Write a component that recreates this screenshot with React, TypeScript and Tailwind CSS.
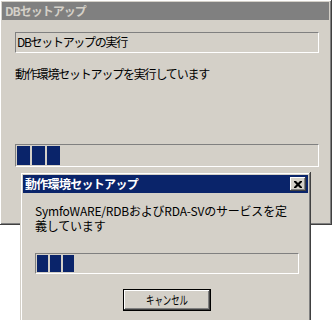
import React from 'react';

const font = { fontFamily: '"Noto Sans CJK JP", "Liberation Sans", sans-serif' };

const Blocks: React.FC<{ count: number; w: string; h: string }> = ({ count, w, h }) => (
  <div className="flex gap-[2px]">
    {Array.from({ length: count }).map((_, i) => (
      <div key={i} className={`${w} ${h} bg-[#0a246a]`} />
    ))}
  </div>
);

export default function App() {
  return (
    <div className="relative w-[332px] h-[320px] bg-white overflow-hidden text-[12px] leading-[14px] text-black" style={font}>
      {/* main window */}
      <div className="w-[332px] h-[225px] bg-[#d4d0c8] p-[2px] shadow-[inset_-1px_-1px_#404040,inset_1px_1px_#ffffff,inset_-2px_-2px_#808080,inset_2px_2px_#d4d0c8] flex flex-col">
        <div className="h-[18px] bg-[#808080] flex items-center pl-[3px] mr-[1px]">
          <span className="font-bold text-[#d4d0c8] tracking-[-1px]">DBセットアップ</span>
        </div>
        <div className="pl-[13px] pr-[11px] pt-[12px] flex flex-col">
          <div className="h-[21px] border-t border-l border-[#808080] border-b border-r border-b-white border-r-white flex items-center pl-[1px] pb-[1px] tracking-[-1.3px]">
            DBセットアップの実行
          </div>
          <div className="mt-[14px] tracking-[-1.2px]">動作環境セットアップを実行しています</div>
          <div className="mt-[63px] h-[23px] border border-[#808080] border-b-white border-r-white p-[1px]">
            <Blocks count={3} w="w-[13px]" h="h-[19px]" />
          </div>
        </div>
      </div>

      {/* dialog */}
      <div className="absolute left-[20px] top-[172px] w-[291px] h-[150px] bg-[#d4d0c8] p-[3px] shadow-[inset_-1px_-1px_#404040,inset_1px_1px_#d4d0c8,inset_-2px_-2px_#808080,inset_2px_2px_#ffffff] flex flex-col">
        <div className="h-[18px] bg-[#0a246a] flex items-center justify-between pl-[2px] pr-[2px]">
          <span className="font-bold text-white tracking-[-0.7px]">動作環境セットアップ</span>
          <div className="w-[16px] h-[14px] bg-[#d4d0c8] shadow-[inset_-1px_-1px_#404040,inset_1px_1px_#ffffff,inset_-2px_-2px_#808080] flex items-center justify-center">
            <svg width="8" height="7" viewBox="0 0 8 7">
              <path d="M0 0h2l2 2 2-2h2v1l-2.5 2.5L8 6v1H6L4 5 2 7H0V6l2.5-2.5L0 1z" fill="#000" />
            </svg>
          </div>
        </div>
        <div className="pl-[12px] pr-[9px] pt-[10px] flex flex-col">
          <div className="tracking-[-0.2px] leading-[15px]">
            <div>SymfoWARE/RDBおよびRDA-SVのサービスを定</div>
            <div>義しています</div>
          </div>
          <div className="mt-[20px] h-[21px] border border-[#808080] border-b-white border-r-white p-[1px]">
            <Blocks count={3} w="w-[11px]" h="h-[17px]" />
          </div>
          <div className="flex justify-center mt-[15px]">
            <button className="w-[88px] h-[22px] bg-[#d4d0c8] border border-black shadow-[inset_-1px_-1px_#404040,inset_1px_1px_#ffffff,inset_-2px_-2px_#808080] flex items-center justify-center pb-[1px]">
              <span className="inline-block scale-x-[0.7]">キャンセル</span>
            </button>
          </div>
        </div>
      </div>
    </div>
  );
}
